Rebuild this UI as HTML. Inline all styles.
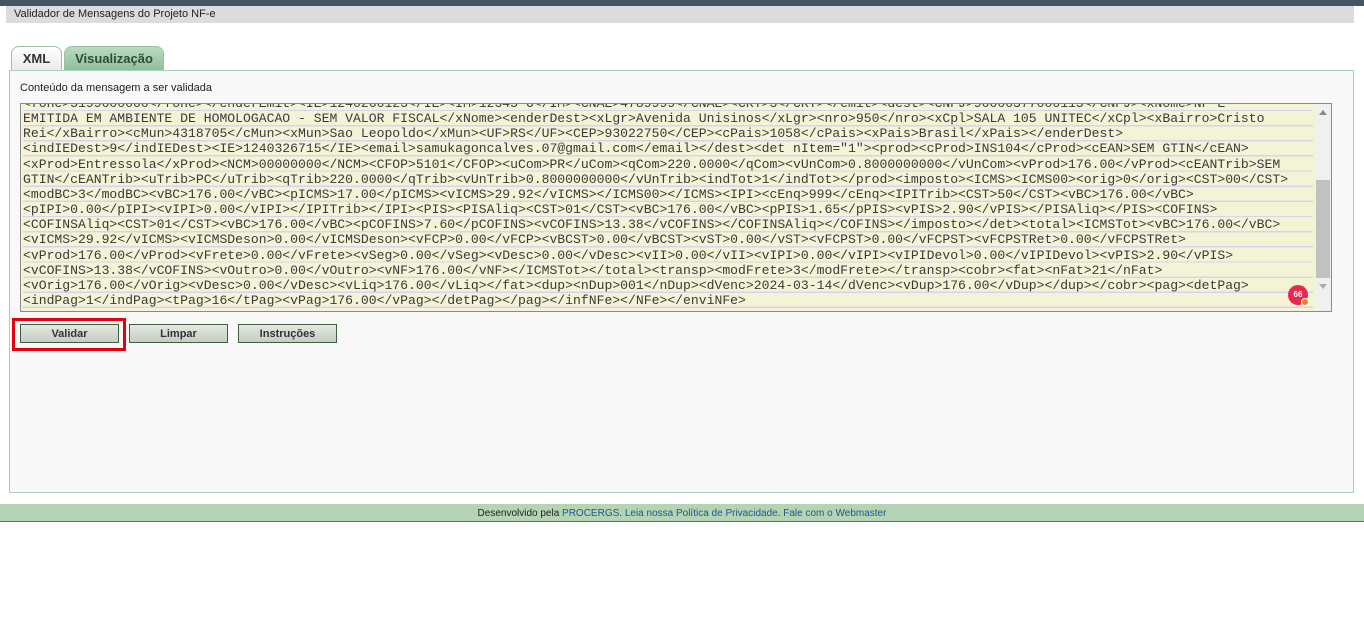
<!DOCTYPE html>
<html><head><meta charset="utf-8"><style>
body{margin:0;width:1364px;height:644px;background:#fff;font-family:"Liberation Sans",Arial,sans-serif;position:relative;overflow:hidden}
.top{position:absolute;left:0;top:0;width:1364px;height:6px;background:#46555f}
.hdr{position:absolute;left:6px;top:6px;width:1348px;height:17px;background:#dcdcdc;font-size:11px;color:#222;line-height:17px;padding-left:8px;box-sizing:border-box}
.tab{position:absolute;top:46px;height:24px;border:1px solid #9dbfa6;border-bottom:none;border-radius:8px 8px 0 0;font-weight:bold;font-size:13px;color:#333;text-align:center;line-height:24px;box-sizing:border-box}
.panel{position:absolute;left:9px;top:70px;width:1345px;height:423px;background:#f8f8f8;border:1px solid #a9cfb5;box-sizing:border-box}
.lbl{position:absolute;left:20px;top:82px;font-size:11px;color:#222}
.ta{position:absolute;left:20px;top:103px;width:1312px;height:209px;background:#f4f3d6;border:1px solid #8a8a8a;box-sizing:border-box;overflow:hidden}
.txt{position:absolute;left:2px;top:-8px;font-family:"Liberation Mono",monospace;font-size:13.1px;line-height:15.15px;color:#3a3a3a;white-space:pre;
background:repeating-linear-gradient(to bottom,transparent 0,transparent 13.8px,#d6d3f0 13.8px,#d6d3f0 15.15px);width:1290px}
.sb{position:absolute;right:0;top:0;width:16px;height:100%;background:#f0f0f0}
.thumb{position:absolute;left:1px;top:76px;width:14px;height:98px;background:#c1c1c1}
.btn{position:absolute;top:324px;width:99px;height:19px;border:1px solid #3f5f3f;background:linear-gradient(#e4e8e2,#c4cec2);font-size:11px;font-weight:bold;color:#333;text-align:center;line-height:18px;box-sizing:border-box}
.red{position:absolute;left:12px;top:318px;width:114px;height:33px;border:3px solid #e3000f;box-sizing:border-box}
.foot{position:absolute;left:0;top:504px;width:1364px;height:17px;background:#b4d4b4;border-bottom:1px solid #4d7d55;font-size:10px;text-align:center;line-height:19px;color:#222}
.foot span{color:#1a5a8a}
.badge{position:absolute;left:1288px;top:285px;width:20px;height:20px;border-radius:50%;background:#e8284c;color:#fff;font-size:8px;font-weight:bold;text-align:center;line-height:20px}
.dot{position:absolute;left:1301px;top:298px;width:6px;height:6px;border-radius:50%;background:#f57c1f;border:1.5px solid #fff}
</style></head><body>
<div class="top"></div>
<div class="hdr">Validador de Mensagens do Projeto NF-e</div>
<div class="tab" style="left:11px;width:51px;background:linear-gradient(#fff,#eaeaea)">XML</div>
<div class="tab" style="left:64px;width:100px;background:linear-gradient(#b8dcc0,#8fbf9b);color:#2f4a35">Visualização</div>
<div class="panel"></div>
<div class="lbl">Conteúdo da mensagem a ser validada</div>
<div class="ta"><div class="txt">&lt;fone&gt;5199000000&lt;/fone&gt;&lt;/enderEmit&gt;&lt;IE&gt;1240260123&lt;/IE&gt;&lt;IM&gt;12345-6&lt;/IM&gt;&lt;CNAE&gt;4789999&lt;/CNAE&gt;&lt;CRT&gt;3&lt;/CRT&gt;&lt;/emit&gt;&lt;dest&gt;&lt;CNPJ&gt;90000377000115&lt;/CNPJ&gt;&lt;xNome&gt;NF-E
EMITIDA EM AMBIENTE DE HOMOLOGACAO - SEM VALOR FISCAL&lt;/xNome&gt;&lt;enderDest&gt;&lt;xLgr&gt;Avenida Unisinos&lt;/xLgr&gt;&lt;nro&gt;950&lt;/nro&gt;&lt;xCpl&gt;SALA 105 UNITEC&lt;/xCpl&gt;&lt;xBairro&gt;Cristo
Rei&lt;/xBairro&gt;&lt;cMun&gt;4318705&lt;/cMun&gt;&lt;xMun&gt;Sao Leopoldo&lt;/xMun&gt;&lt;UF&gt;RS&lt;/UF&gt;&lt;CEP&gt;93022750&lt;/CEP&gt;&lt;cPais&gt;1058&lt;/cPais&gt;&lt;xPais&gt;Brasil&lt;/xPais&gt;&lt;/enderDest&gt;
&lt;indIEDest&gt;9&lt;/indIEDest&gt;&lt;IE&gt;1240326715&lt;/IE&gt;&lt;email&gt;samukagoncalves.07@gmail.com&lt;/email&gt;&lt;/dest&gt;&lt;det nItem="1"&gt;&lt;prod&gt;&lt;cProd&gt;INS104&lt;/cProd&gt;&lt;cEAN&gt;SEM GTIN&lt;/cEAN&gt;
&lt;xProd&gt;Entressola&lt;/xProd&gt;&lt;NCM&gt;00000000&lt;/NCM&gt;&lt;CFOP&gt;5101&lt;/CFOP&gt;&lt;uCom&gt;PR&lt;/uCom&gt;&lt;qCom&gt;220.0000&lt;/qCom&gt;&lt;vUnCom&gt;0.8000000000&lt;/vUnCom&gt;&lt;vProd&gt;176.00&lt;/vProd&gt;&lt;cEANTrib&gt;SEM
GTIN&lt;/cEANTrib&gt;&lt;uTrib&gt;PC&lt;/uTrib&gt;&lt;qTrib&gt;220.0000&lt;/qTrib&gt;&lt;vUnTrib&gt;0.8000000000&lt;/vUnTrib&gt;&lt;indTot&gt;1&lt;/indTot&gt;&lt;/prod&gt;&lt;imposto&gt;&lt;ICMS&gt;&lt;ICMS00&gt;&lt;orig&gt;0&lt;/orig&gt;&lt;CST&gt;00&lt;/CST&gt;
&lt;modBC&gt;3&lt;/modBC&gt;&lt;vBC&gt;176.00&lt;/vBC&gt;&lt;pICMS&gt;17.00&lt;/pICMS&gt;&lt;vICMS&gt;29.92&lt;/vICMS&gt;&lt;/ICMS00&gt;&lt;/ICMS&gt;&lt;IPI&gt;&lt;cEnq&gt;999&lt;/cEnq&gt;&lt;IPITrib&gt;&lt;CST&gt;50&lt;/CST&gt;&lt;vBC&gt;176.00&lt;/vBC&gt;
&lt;pIPI&gt;0.00&lt;/pIPI&gt;&lt;vIPI&gt;0.00&lt;/vIPI&gt;&lt;/IPITrib&gt;&lt;/IPI&gt;&lt;PIS&gt;&lt;PISAliq&gt;&lt;CST&gt;01&lt;/CST&gt;&lt;vBC&gt;176.00&lt;/vBC&gt;&lt;pPIS&gt;1.65&lt;/pPIS&gt;&lt;vPIS&gt;2.90&lt;/vPIS&gt;&lt;/PISAliq&gt;&lt;/PIS&gt;&lt;COFINS&gt;
&lt;COFINSAliq&gt;&lt;CST&gt;01&lt;/CST&gt;&lt;vBC&gt;176.00&lt;/vBC&gt;&lt;pCOFINS&gt;7.60&lt;/pCOFINS&gt;&lt;vCOFINS&gt;13.38&lt;/vCOFINS&gt;&lt;/COFINSAliq&gt;&lt;/COFINS&gt;&lt;/imposto&gt;&lt;/det&gt;&lt;total&gt;&lt;ICMSTot&gt;&lt;vBC&gt;176.00&lt;/vBC&gt;
&lt;vICMS&gt;29.92&lt;/vICMS&gt;&lt;vICMSDeson&gt;0.00&lt;/vICMSDeson&gt;&lt;vFCP&gt;0.00&lt;/vFCP&gt;&lt;vBCST&gt;0.00&lt;/vBCST&gt;&lt;vST&gt;0.00&lt;/vST&gt;&lt;vFCPST&gt;0.00&lt;/vFCPST&gt;&lt;vFCPSTRet&gt;0.00&lt;/vFCPSTRet&gt;
&lt;vProd&gt;176.00&lt;/vProd&gt;&lt;vFrete&gt;0.00&lt;/vFrete&gt;&lt;vSeg&gt;0.00&lt;/vSeg&gt;&lt;vDesc&gt;0.00&lt;/vDesc&gt;&lt;vII&gt;0.00&lt;/vII&gt;&lt;vIPI&gt;0.00&lt;/vIPI&gt;&lt;vIPIDevol&gt;0.00&lt;/vIPIDevol&gt;&lt;vPIS&gt;2.90&lt;/vPIS&gt;
&lt;vCOFINS&gt;13.38&lt;/vCOFINS&gt;&lt;vOutro&gt;0.00&lt;/vOutro&gt;&lt;vNF&gt;176.00&lt;/vNF&gt;&lt;/ICMSTot&gt;&lt;/total&gt;&lt;transp&gt;&lt;modFrete&gt;3&lt;/modFrete&gt;&lt;/transp&gt;&lt;cobr&gt;&lt;fat&gt;&lt;nFat&gt;21&lt;/nFat&gt;
&lt;vOrig&gt;176.00&lt;/vOrig&gt;&lt;vDesc&gt;0.00&lt;/vDesc&gt;&lt;vLiq&gt;176.00&lt;/vLiq&gt;&lt;/fat&gt;&lt;dup&gt;&lt;nDup&gt;001&lt;/nDup&gt;&lt;dVenc&gt;2024-03-14&lt;/dVenc&gt;&lt;vDup&gt;176.00&lt;/vDup&gt;&lt;/dup&gt;&lt;/cobr&gt;&lt;pag&gt;&lt;detPag&gt;
&lt;indPag&gt;1&lt;/indPag&gt;&lt;tPag&gt;16&lt;/tPag&gt;&lt;vPag&gt;176.00&lt;/vPag&gt;&lt;/detPag&gt;&lt;/pag&gt;&lt;/infNFe&gt;&lt;/NFe&gt;&lt;/enviNFe&gt;</div>
<div class="sb"><div class="thumb"></div><div style="position:absolute;left:4px;top:6px;width:0;height:0;border:4px solid transparent;border-bottom:5px solid #888;border-top:none"></div><div style="position:absolute;left:4px;top:180px;width:0;height:0;border:4px solid transparent;border-top:5px solid #aaa;border-bottom:none"></div></div>
</div>
<div class="badge">66</div><div class="dot"></div>
<div class="btn" style="left:20px">Validar</div>
<div class="btn" style="left:129px">Limpar</div>
<div class="btn" style="left:238px">Instruções</div>
<div class="red"></div>
<div class="foot">Desenvolvido pela <span>PROCERGS</span>. <span>Leia nossa Política de Privacidade</span>. <span>Fale com o Webmaster</span></div>
</body></html>
